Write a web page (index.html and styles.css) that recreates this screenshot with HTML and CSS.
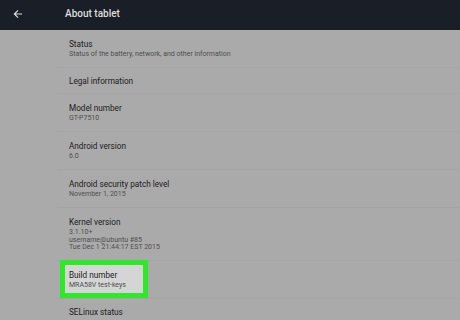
FILE: index.html
```html
<!DOCTYPE html>
<html>
<head>
<meta charset="utf-8">
<link rel="stylesheet" href="styles.css">
</head>
<body>
<div class="screen">
  <header class="appbar">
    <svg class="back" width="10" height="10" viewBox="0 0 10 10"><path d="M9 5H1.4M5 1.4L1.4 5L5 8.6" fill="none" stroke="#dcdcdc" stroke-width="1.2"/></svg>
    <div class="appbar-title">About tablet</div>
  </header>
  <div class="list">
    <div class="row">
      <div class="title">Status</div>
      <div class="sub">Status of the battery, network, and other information</div>
    </div>
    <div class="row single">
      <div class="title">Legal information</div>
    </div>
    <div class="row">
      <div class="title">Model number</div>
      <div class="sub">GT-P7510</div>
    </div>
    <div class="row">
      <div class="title">Android version</div>
      <div class="sub">6.0</div>
    </div>
    <div class="row">
      <div class="title">Android security patch level</div>
      <div class="sub">November 1, 2015</div>
    </div>
    <div class="row">
      <div class="title">Kernel version</div>
      <div class="sub">3.1.10+<br>username@ubuntu #85<br>Tue Dec 1 21:44:17 EST 2015</div>
    </div>
    <div class="row build">
      <div class="highlight"></div>
      <div class="title">Build number</div>
      <div class="sub">MRA58V test-keys</div>
    </div>
    <div class="row last">
      <div class="title">SELinux status</div>
    </div>
  </div>
</div>
</body>
</html>
```
FILE: styles.css
```css
html, body {
  margin: 0;
  padding: 0;
}
body {
  width: 460px;
  height: 320px;
  overflow: hidden;
  background: #aaaaaa;
  font-family: Roboto, "Noto Sans", sans-serif;
}
.screen {
  display: flex;
  flex-direction: column;
}
.appbar {
  height: 30px;
  background: #1a1f27;
  display: flex;
  align-items: center;
  padding-left: 13px;
  box-sizing: border-box;
}
.back {
  display: block;
  margin-top: -3px;
}
.appbar-title {
  margin-left: 42px;
  color: #dedede;
  font-size: 10px;
  font-weight: 500;
  margin-top: -3px;
}
.list {
  display: flex;
  flex-direction: column;
}
.row {
  position: relative;
  margin-left: 57px;
  padding: 8px 0 8.5px 12px;
  border-top: 1px solid #a5a5a5;
}
.row:first-child {
  border-top: none;
}
.row.single {
  padding: 7px 0 6px 12px;
}
.row.last {
  padding: 7px 0 0 12px;
}
.title {
  position: relative;
  z-index: 1;
  font-size: 8.2px;
  line-height: 12px;
  color: #1b1b1b;
}
.sub {
  position: relative;
  z-index: 1;
  margin-top: 1px;
  font-size: 7px;
  line-height: 7.5px;
  color: #4f4f4f;
}
.highlight {
  position: absolute;
  left: 3px;
  top: -1px;
  width: 78px;
  height: 28px;
  border: 5px solid #2ee82a;
  background: #d5d5d5;
}
```
